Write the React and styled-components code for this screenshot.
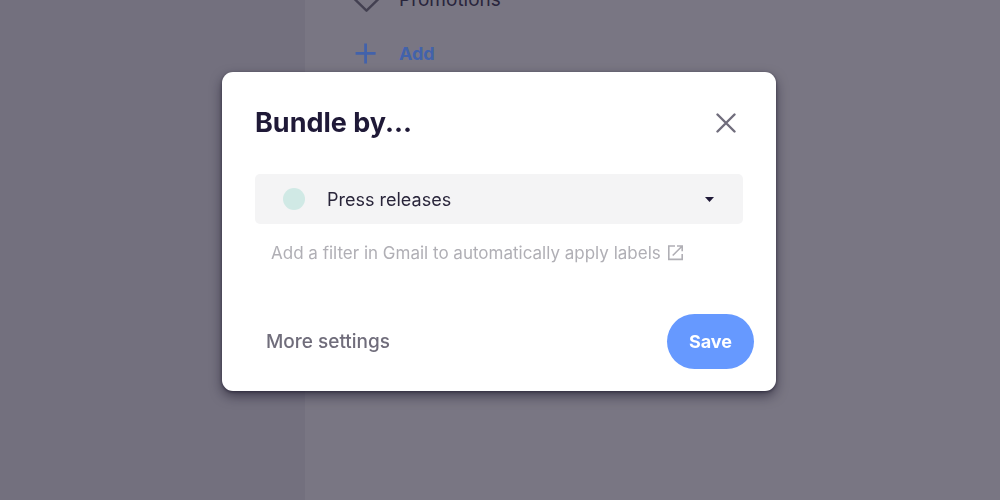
import React, { useState } from 'react';
import styled, { createGlobalStyle } from 'styled-components';

const GlobalStyle = createGlobalStyle`
    * {
        box-sizing: border-box;
    }
    body {
        margin: 0;
        overflow: hidden;
        background-color: #797683;
        color: #1f1a33;
        font-family: Inter, "Liberation Sans", sans-serif;
        font-size: 18px;
    }
    button, select {
        font-family: inherit;
        font-size: inherit;
        border: 0;
        padding: 0;
        background: none;
        color: inherit;
        cursor: pointer;
    }
`;

const Page = styled.div`
    display: flex;
    height: 100vh;
    overflow: hidden;
`;

const Sidebar = styled.aside`
    flex: 0 0 305px;
    background-color: #73707e;
`;

const LabelList = styled.main`
    flex: 1;
    padding-left: 48px;
    margin-top: -28px;
`;

const LabelRow = styled.button`
    display: flex;
    align-items: center;
    gap: 20px;
    height: 54px;
    color: ${props => props.$accent ? '#4262ab' : '#29253c'};
    font-size: ${props => props.$accent ? '18px' : '19px'};
    font-weight: ${props => props.$accent ? 700 : 400};
    svg {
        width: 26px;
        height: 26px;
        overflow: visible;
    }
`;

const Overlay = styled.div`
    position: fixed;
    inset: 0;
    display: flex;
    justify-content: center;
    align-items: flex-start;
    padding: 72px 24px 24px 22px;
`;

const Dialog = styled.div`
    width: 100%;
    max-width: 554px;
    padding: 22px;
    border-radius: 11px;
    background-color: #fff;
    box-shadow: 0 5px 12px rgba(20, 16, 36, 0.55), 0 1px 3px rgba(20, 16, 36, 0.5);
`;

const Body = styled.div`
    padding: 0 11px;
`;

const Header = styled.header`
    display: flex;
    justify-content: space-between;
    align-items: center;
    height: 58px;
    margin-bottom: 22px;
`;

const Title = styled.h1`
    margin: 0;
    color: #1f1937;
    font-size: 27px;
    line-height: 32px;
    font-weight: 700;
`;

const CloseButton = styled.button`
    display: flex;
    padding: 7px;
    color: #706d7c;
`;

const Field = styled.div`
    display: flex;
    align-items: center;
    height: 50px;
    padding: 0 28px;
    border-radius: 5px;
    background-color: #f4f4f5;
`;

const Dot = styled.span`
    flex: none;
    width: 22px;
    height: 22px;
    margin-right: 22px;
    border-radius: 50%;
    background-color: #d0e9e5;
`;

const Select = styled.select`
    flex: 1;
    min-width: 0;
    height: 100%;
    color: #29253a;
    appearance: none;
    outline: none;
`;

const FilterLink = styled.a`
    display: inline-flex;
    align-items: center;
    gap: 6px;
    margin: 17px 16px 0;
    color: #b0afb5;
    font-size: 17px;
    line-height: 24px;
    text-decoration: none;
`;

const Footer = styled.footer`
    display: flex;
    justify-content: space-between;
    align-items: center;
    margin-top: 49px;
`;

const MoreButton = styled.button`
    padding: 0 22px;
    height: 55px;
    color: #706d7b;
    font-size: 19px;
    font-weight: 500;
`;

const SaveButton = styled.button`
    padding: 0 22px;
    height: 55px;
    border-radius: 28px;
    background-color: #6699ff;
    color: #fff;
    font-weight: 700;
`;

export default function App() {
    const [label, setLabel] = useState('Press releases');

    return (
        <>
            <GlobalStyle />
            <Page>
                <Sidebar />
                <LabelList>
                    <LabelRow>
                        <svg viewBox="0 0 26 26" fill="none" stroke="#434051" strokeWidth="2.4" strokeLinejoin="round">
                            <path d="M1 0v12.5l12.5 12.2L26 12.5 14 0z" />
                        </svg>
                        Promotions
                    </LabelRow>
                    <LabelRow $accent>
                        <svg viewBox="0 0 26 26" fill="none" stroke="currentColor" strokeWidth="2.8">
                            <path d="M2.6 13.4h20M12.6 3.4v20" />
                        </svg>
                        Add
                    </LabelRow>
                </LabelList>
            </Page>
            <Overlay>
                <Dialog role="dialog" aria-modal="true" aria-labelledby="bundle-title">
                    <Body>
                        <Header>
                            <Title id="bundle-title">Bundle by...</Title>
                            <CloseButton aria-label="Close">
                                <svg width="20" height="20" viewBox="0 0 20 20" fill="none" stroke="currentColor" strokeWidth="2.4" strokeLinecap="round">
                                    <path d="M1.5 1.5l17 17M18.5 1.5l-17 17" />
                                </svg>
                            </CloseButton>
                        </Header>
                        <Field>
                            <Dot />
                            <Select aria-label="Bundle by" value={label} onChange={e => setLabel(e.target.value)}>
                                <option>Press releases</option>
                                <option>Promotions</option>
                            </Select>
                            <svg width="10" height="5" viewBox="0 0 10 5" fill="#1f1937">
                                <path d="M0 0h9L4.5 5z" />
                            </svg>
                        </Field>
                        <FilterLink href="#filters">
                            Add a filter in Gmail to automatically apply labels
                            <svg width="17" height="17" viewBox="0 0 17 17" fill="none" stroke="currentColor" strokeWidth="1.6">
                                <path d="M8 1H1.8v13.4h13.4V9M10 1h5.2v5.2M15.2 1L5.7 10.5" />
                            </svg>
                        </FilterLink>
                    </Body>
                    <Footer>
                        <MoreButton>More settings</MoreButton>
                        <SaveButton>Save</SaveButton>
                    </Footer>
                </Dialog>
            </Overlay>
        </>
    );
}
